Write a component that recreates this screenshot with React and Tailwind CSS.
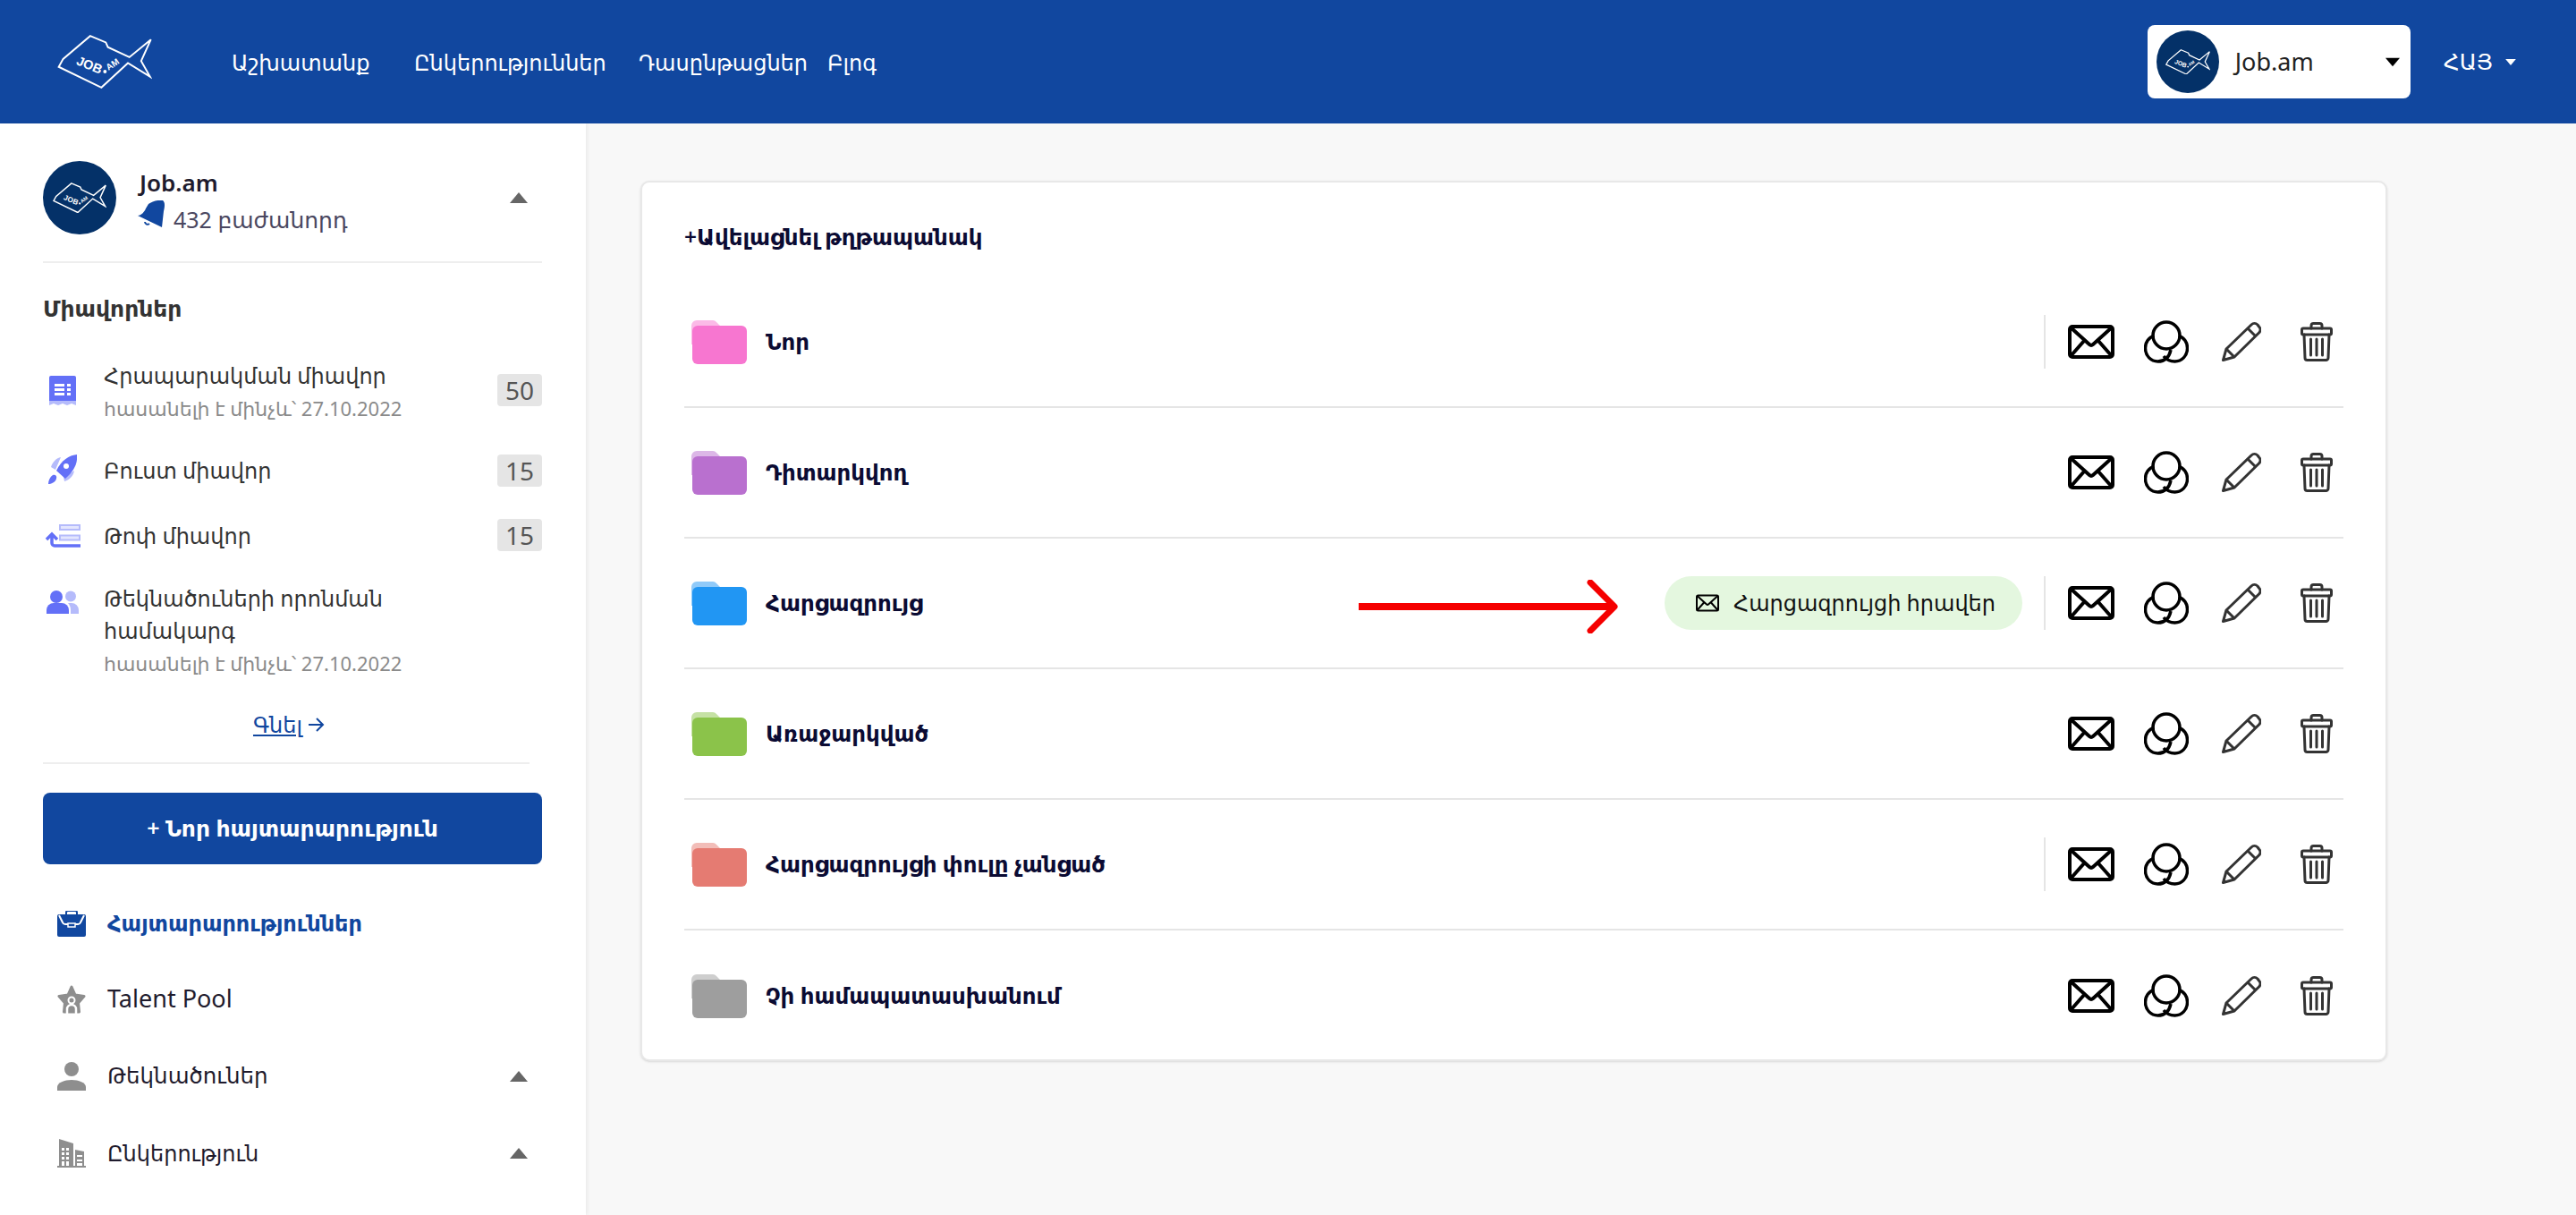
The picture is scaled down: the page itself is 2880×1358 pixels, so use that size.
const UNIT_ROWS = [
  { title: 'Հրապարակման միավոր', sub: 'հասանելի է մինչև՝ 27.10.2022', badge: '50', icon: 'receipt', rowClass: 'mt-[38px]', badgeClass: 'mt-[16px]' },
  { title: 'Բուստ միավոր', badge: '15', icon: 'rocket', rowClass: 'mt-[34px]', badgeClass: 'mt-0' },
  { title: 'Թոփ միավոր', badge: '15', icon: 'top', rowClass: 'mt-[37px]', badgeClass: '-mt-px' },
  { title: 'Թեկնածուների որոնման համակարգ', sub: 'հասանելի է մինչև՝ 27.10.2022', icon: 'users', rowClass: 'mt-[34px]' },
];

const FOLDERS = [
  { name: 'Նոր', color: '#f776d0', sep: true },
  { name: 'Դիտարկվող', color: '#b970cf' },
  { name: 'Հարցազրույց', color: '#2196f3', sep: true, invite: true },
  { name: 'Առաջարկված', color: '#8bc34a' },
  { name: 'Հարցազրույցի փուլը չանցած', color: '#e57b72', sep: true },
  { name: 'Չի համապատասխանում', color: '#9e9e9e' },
];

const Fish = ({ className, stroke = 7 }) => (
  <svg viewBox="100 85 322 185" className={className} fill="none">
    <path
      d="M212 90 L265 112 L272 128 L345 162 L418 102 L385 175 L415 228 L340 182 L250 265 L105 195 L120 168 Z"
      stroke="#fff"
      strokeWidth={stroke}
      strokeLinejoin="miter"
    />
    <text x="162" y="186" transform="rotate(22 162 186)" fill="#fff" fontSize="44" fontWeight="700" fontFamily="'Liberation Sans', sans-serif">JOB</text>
    <circle cx="262" cy="211" r="6" fill="#fff" />
    <text x="274" y="208" transform="rotate(-34 274 208)" fill="#fff" fontSize="30" fontWeight="700" fontFamily="'Liberation Sans', sans-serif">AM</text>
  </svg>
);

const Avatar = ({ className, fishClass }) => (
  <div className={`rounded-full bg-[#043168] flex items-center justify-center shrink-0 ${className}`}>
    <Fish className={fishClass} stroke={8} />
  </div>
);

const Caret = ({ className }) => (
  <svg viewBox="0 0 20 12" className={className}>
    <path d="M10 0 L20 12 H0 Z" fill="currentColor" />
  </svg>
);

const Folder = ({ color }) => (
  <svg viewBox="0 0 62 49" className="w-[62px] h-[49px] shrink-0">
    <path d="M0 6 a6 6 0 0 1 6-6 h18 a6 6 0 0 1 4 2 l5 5 v20 H0 Z" fill={color} opacity="0.5" />
    <rect x="1" y="6" width="61" height="43" rx="6" fill={color} />
  </svg>
);

const UnitIcon = ({ type }) => {
  const c = '#6370f7';
  if (type === 'receipt') {
    return (
      <svg viewBox="0 0 30 34" className="w-[30px] h-[34px] ml-[7px] mt-[18px]">
        <path d="M0 2 a2 2 0 0 1 2-2 h26 a2 2 0 0 1 2 2 v26 H0 Z" fill={c} />
        <path d="M0 28 h30 v5 l-5-2 -5 2 -5-2 -5 2 -5-2 -5 2 Z" fill="#b5bbfb" />
        <path d="M6 9 h11 v3 H6 Z M20 9 h4 v3 h-4 Z M6 14 h11 v3 H6 Z M20 14 h4 v3 h-4 Z M6 19 h11 v3 H6 Z M20 19 h4 v3 h-4 Z" fill="#fff" />
      </svg>
    );
  }
  if (type === 'rocket') {
    return (
      <svg viewBox="0 0 32 33" className="w-[32px] h-[33px] ml-[6px]">
        <path d="M3 14 C5 8 9 4 14 3 L8 17 Z M18 30 C24 28 28 24 29 18 L17 25 Z" fill="#b5bbfb" />
        <path d="M32 0 C33 10 29 18 19 27 L9 18 C15 6 23 1 32 0 Z" fill={c} />
        <circle cx="20" cy="13" r="3" fill="#fff" />
        <path d="M5 23 C8 22 10 24 9 27 C8 31 3 33 0 33 C0 29 2 25 5 23 Z" fill={c} />
      </svg>
    );
  }
  if (type === 'top') {
    return (
      <svg viewBox="0 0 40 26" className="w-[40px] h-[26px] ml-[2px] mt-[5px]">
        <rect x="17" y="1" width="22" height="5" fill="#e4e6fe" stroke="#b5bbfb" strokeWidth="2" />
        <rect x="17" y="12.5" width="22" height="5" fill="#e4e6fe" stroke="#b5bbfb" strokeWidth="2" />
        <path d="M8 11 V21 a3 3 0 0 0 3 3 H40 M2 17 L8 11 L14 17" fill="none" stroke={c} strokeWidth="3.5" />
      </svg>
    );
  }
  return (
    <svg viewBox="0 0 36 26" className="w-[36px] h-[26px] ml-[4px] mt-[9px]">
      <circle cx="27" cy="6.5" r="6" fill="#b5bbfb" />
      <path d="M24 14 h4 a8 8 0 0 1 8 8 v4 H27 v-4 c0-3 -1-6 -3-8 Z" fill="#b5bbfb" />
      <circle cx="11" cy="7" r="7" fill={c} />
      <path d="M0 26 v-4 a8 8 0 0 1 8-8 h9 a8 8 0 0 1 8 8 v4 Z" fill={c} />
    </svg>
  );
};

const NavIcon = ({ type }) => {
  const g = '#8e8e8e';
  if (type === 'case') {
    return (
      <svg viewBox="0 0 32 29" className="w-[32px] h-[29px]">
        <path d="M10 5 V2 a2 2 0 0 1 2-2 h8 a2 2 0 0 1 2 2 v3" fill="none" stroke="#11479f" strokeWidth="2" />
        <path d="M2 4 h28 a2 2 0 0 1 2 2 v21 a2 2 0 0 1-2 2 H2 a2 2 0 0 1-2-2 V6 a2 2 0 0 1 2-2 Z" fill="#11479f" />
        <path d="M2 5 L6 13 a3 3 0 0 0 3 2 H23 a3 3 0 0 0 3-2 L30 5" fill="none" stroke="#fff" strokeWidth="2" />
        <rect x="12" y="14" width="8" height="4" fill="#11479f" stroke="#fff" strokeWidth="1.5" />
      </svg>
    );
  }
  if (type === 'talent') {
    return (
      <svg viewBox="0 0 32 32" className="w-[32px] h-[32px]">
        <path d="M16 2 L20 11 L30 12.5 L23.5 20 L24.5 30 H7.5 L8.5 20 L2 12.5 L12 11 Z" fill={g} stroke={g} strokeWidth="3" strokeLinejoin="round" />
        <circle cx="16" cy="17" r="3.5" fill="none" stroke="#fff" strokeWidth="2" />
        <path d="M11 32 V27 a5 5 0 0 1 10 0 V32" fill="none" stroke="#fff" strokeWidth="2.5" />
      </svg>
    );
  }
  if (type === 'person') {
    return (
      <svg viewBox="0 0 32 32" className="w-[32px] h-[32px]">
        <circle cx="16" cy="8" r="8" fill={g} />
        <path d="M0 32 v-4 c0-5 8-8 16-8 s16 3 16 8 v4 Z" fill={g} />
      </svg>
    );
  }
  return (
    <svg viewBox="0 0 32 32" className="w-[32px] h-[32px]">
      <path d="M2 0 L18 5 V32 H2 Z M20 12 L30 14 V32 H20 Z M0 30 H32 V32 H0 Z" fill={g} />
      <path d="M5 10 h3 v3 H5 Z M10 10 h3 v3 h-3 Z M5 15 h3 v3 H5 Z M10 15 h3 v3 h-3 Z M5 20 h3 v3 H5 Z M10 20 h3 v3 h-3 Z M5 25 h3 v5 H5 Z M10 25 h3 v5 h-3 Z M22 18 h6 v2 h-6 Z M22 23 h6 v2 h-6 Z M22 27 h6 v3 h-6 Z" fill="#fff" />
    </svg>
  );
};

const Envelope = ({ className, width = 4 }) => (
  <svg viewBox="0 0 52 38" className={className} fill="none" stroke="#000" strokeWidth={width} strokeLinejoin="round">
    <rect x="2" y="2" width="48" height="34" rx="3" />
    <path d="M3 3 L24 22 a3 3 0 0 0 4 0 L49 3 M3 35 L18 18 M49 35 L34 18" />
  </svg>
);

const Circles = () => (
  <svg viewBox="0 0 50 48" className="w-[50px] h-[48px]" fill="none" stroke="#000" strokeWidth="3.5">
    <circle cx="25" cy="17" r="15" />
    <path d="M11.5 17.5 C5 19 1.5 25 1.5 31 C1.5 40 8 46 15.5 46 C23 46 28 42 30 33" />
    <path d="M38.5 17.5 C45 19 48.5 25 48.5 31 C48.5 40 42 46 34.5 46 C29 46 25 44 22 40" />
  </svg>
);

const Pencil = () => (
  <svg viewBox="0 0 44 44" className="w-[44px] h-[44px]" fill="none" stroke="#333" strokeWidth="3" strokeLinejoin="round">
    <path d="M1.5 42.5 L5 30 L33 3 a5 5 0 0 1 7 0 L41.5 5 a5 5 0 0 1 0 7 L14 39 Z" />
    <path d="M29 7 L37.5 15.5 M5 30 L14 39" />
  </svg>
);

const Trash = () => (
  <svg viewBox="0 0 36 44" className="w-[36px] h-[44px]" fill="none" stroke="#333" strokeWidth="3" strokeLinejoin="round" strokeLinecap="round">
    <path d="M12 7 V4 a2.5 2.5 0 0 1 2.5-2.5 h7 a2.5 2.5 0 0 1 2.5 2.5 V7" />
    <rect x="1.5" y="7" width="33" height="7" rx="1.5" />
    <path d="M4 14 L5 40 a2.5 2.5 0 0 0 2.5 2.5 h21 a2.5 2.5 0 0 0 2.5-2.5 L32 14" />
    <path d="M11.5 19 V37 M18 19 V37 M24.5 19 V37" />
  </svg>
);

const RedArrow = () => (
  <svg viewBox="0 0 292 60" className="w-[292px] h-[60px] shrink-0 mr-[50px] mt-2">
    <path d="M0 30 H286" stroke="#f50000" strokeWidth="8" />
    <path d="M259 3 L286 30 L259 57" fill="none" stroke="#f50000" strokeWidth="7" strokeLinecap="round" strokeLinejoin="round" />
  </svg>
);

const App = () => {
  return (
    <div className="h-screen overflow-hidden flex flex-col bg-[#f8f8f8] font-['Noto_Sans','DejaVu_Sans',sans-serif]">
      {/* Header */}
      <header className="h-[138px] shrink-0 bg-[#11479f] flex items-center text-white">
        <Fish className="w-[106px] h-[62px] ml-[64px]" stroke={6} />
        <nav className="ml-[89px] mt-[2px] flex items-center text-[24px]">
          <a className="w-[204px]">Աշխատանք</a>
          <a className="w-[251px]">Ընկերություններ</a>
          <a className="w-[211px]">Դասընթացներ</a>
          <a>Բլոգ</a>
        </nav>
        <div className="ml-auto w-[294px] h-[82px] bg-white rounded-lg flex items-center pl-[10px] text-[#222] text-[27px]">
          <Avatar className="w-[70px] h-[70px]" fishClass="w-[50px]" />
          <span className="ml-[18px]">Job.am</span>
          <Caret className="w-[16px] h-[11px] ml-auto mr-[12px] rotate-180 text-black" />
        </div>
        <div className="ml-[37px] mr-[66px] flex items-center text-[25px]">
          ՀԱՅ
          <Caret className="w-[14px] h-[7px] ml-[13px] rotate-180 text-white" />
        </div>
      </header>

      <div className="flex-1 flex min-h-0">
        {/* Sidebar */}
        <aside className="w-[655px] shrink-0 bg-white shadow-[2px_0_4px_rgba(0,0,0,0.06)] pl-[48px] pr-[49px] overflow-hidden">
          <div className="pt-[42px] pb-[30px] border-b-2 border-[#eee]">
            <div className="h-[82px] flex items-center">
              <Avatar className="w-[82px] h-[82px]" fishClass="w-[60px]" />
              <div className="ml-[26px] mt-[12px]">
                <div className="text-[26px] font-semibold text-[#1f1b2d] leading-[36px]">Job.am</div>
                <div className="flex items-center text-[25px] text-[#4a4760] leading-[46px]">
                  <svg viewBox="0 0 30 30" className="w-[30px] h-[30px] -ml-[2px] -mt-3">
                    <path d="M12 4 C16 1 24 -1 28 0 C31 2 30 8 29 12 L27 30 L0 17 C4 17 8 12 9 9 Z" fill="#11479f" />
                    <path d="M8 24 a3 3 0 0 0 5 2" fill="none" stroke="#11479f" strokeWidth="2" />
                  </svg>
                  <span className="ml-[10px]">432 բաժանորդ</span>
                </div>
              </div>
              <Caret className="w-[20px] h-[12px] ml-auto mr-[16px] text-[#666]" />
            </div>
          </div>

          <div className="mt-[30px] text-[25px] font-semibold text-[#333] leading-[40px]">Միավորներ</div>

          {UNIT_ROWS.map(row => (
            <div key={row.title} className={`flex items-start ${row.rowClass}`}>
              <div className="w-[68px] shrink-0"><UnitIcon type={row.icon} /></div>
              <div className="flex-1 min-w-0 pr-[40px]">
                <div className="text-[24px] leading-[36px] text-[#333]">{row.title}</div>
                {row.sub && <div className="text-[22px] leading-[36px] text-[#8a8a8a]">{row.sub}</div>}
              </div>
              {row.badge && (
                <div className={`w-[50px] h-[36px] rounded bg-[#e5e5e5] flex items-center justify-center text-[28px] text-[#555] shrink-0 ${row.badgeClass}`}>
                  {row.badge}
                </div>
              )}
            </div>
          ))}

          <div className="mt-[36px] h-[30px] flex items-center justify-center text-[24px] text-[#11479f] pr-[8px]">
            <a className="underline">Գնել</a>
            <svg viewBox="0 0 18 16" className="w-[18px] h-[16px] ml-[7px]" fill="none" stroke="#11479f" strokeWidth="2">
              <path d="M0 8 H16 M9 1 L16 8 L9 15" />
            </svg>
          </div>

          <div className="mt-[27px] w-[544px] border-b-2 border-[#eee]" />

          <button className="mt-[32px] w-full h-[80px] rounded-lg bg-[#11479f] text-white text-[25px] font-semibold">
            + Նոր հայտարարություն
          </button>

          <div className="mt-[24px]">
            <div className="h-[84px] flex items-center pl-[16px]">
              <NavIcon type="case" />
              <span className="ml-[24px] text-[24px] font-semibold text-[#11479f]">Հայտարարություններ</span>
            </div>
            <div className="h-[85px] flex items-center pl-[16px]">
              <NavIcon type="talent" />
              <span className="ml-[24px] text-[27px] text-[#1f1b2d]">Talent Pool</span>
            </div>
            <div className="h-[87px] flex items-center pl-[16px]">
              <NavIcon type="person" />
              <span className="ml-[24px] text-[24.5px] text-[#1f1b2d]">Թեկնածուներ</span>
              <Caret className="w-[20px] h-[12px] ml-auto mr-[16px] text-[#666]" />
            </div>
            <div className="h-[85px] flex items-center pl-[16px]">
              <NavIcon type="building" />
              <span className="ml-[24px] text-[24px] text-[#1f1b2d]">Ընկերություն</span>
              <Caret className="w-[20px] h-[12px] ml-auto mr-[16px] text-[#666]" />
            </div>
            <div className="h-[85px] flex items-center pl-[16px]">
              <NavIcon type="person" />
            </div>
          </div>
        </aside>

        {/* Main */}
        <main className="flex-1 pl-[61px] pt-[64px] min-w-0">
          <div className="w-[1953px] h-[984px] bg-white border-2 border-[#e8e8e8] rounded-[10px] shadow-sm px-[47px]">
            <div className="pt-[41px] mb-[25px] text-[24.5px] leading-[40px] font-semibold text-[#0b0b33]">+Ավելացնել թղթապանակ</div>
            {FOLDERS.map((folder, i) => (
              <div
                key={folder.name}
                className={`h-[146px] flex items-center ${i < FOLDERS.length - 1 ? 'border-b-2 border-[#e5e5e5]' : ''}`}
              >
                <div className="pl-[8px]"><Folder color={folder.color} /></div>
                <span className="ml-[21px] text-[24.5px] font-semibold text-[#0b0b33]">{folder.name}</span>
                <div className="ml-auto flex items-center">
                  {folder.invite && (
                    <>
                      <RedArrow />
                      <div className="w-[400px] h-[60px] rounded-full bg-[#e4f7df] flex items-center pl-[35px] text-[24px] text-[#111]">
                        <Envelope className="w-[26px] h-[20px] shrink-0" width={4} />
                        <span className="ml-[16px]">Հարցազրույցի հրավեր</span>
                      </div>
                    </>
                  )}
                  <div className={`ml-[24px] w-[2px] h-[60px] ${folder.sep ? 'bg-[#e5e5e5]' : 'bg-transparent'}`} />
                  <div className="ml-[21px] flex items-center gap-[24px]">
                    <div className="w-[60px] flex justify-center"><Envelope className="w-[52px] h-[38px]" /></div>
                    <div className="w-[60px] flex justify-center"><Circles /></div>
                    <div className="w-[60px] flex justify-center"><Pencil /></div>
                    <div className="w-[60px] flex justify-center"><Trash /></div>
                  </div>
                </div>
              </div>
            ))}
          </div>
        </main>
      </div>
    </div>
  );
};

export default App;
